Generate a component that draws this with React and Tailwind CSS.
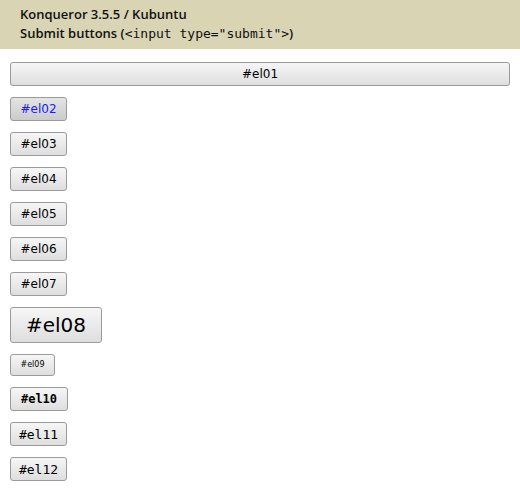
export default function App() {
  const btn =
    "rounded-[3px] border border-[#9a9a9a] bg-gradient-to-b leading-none";
  const plain = `${btn} from-[#f6f6f6] to-[#dedede] text-black`;

  const small = ["#el03", "#el04", "#el05", "#el06", "#el07"];

  return (
    <div className="min-h-screen w-full bg-white" style={{ fontFamily: "'DejaVu Sans', sans-serif" }}>
      {/* Header */}
      <div className="h-[49px] bg-[#d9d4b4] px-[20px] pt-[5px] text-[13px] leading-[19px] text-[#111] font-['Open_Sans',sans-serif] font-semibold">
        <div>Konqueror 3.5.5 / Kubuntu</div>
        <div>
          Submit buttons (
          <span className="font-['DejaVu_Sans_Mono',monospace] font-normal text-[13px]">&lt;input type="submit"&gt;</span>
          )
        </div>
      </div>

      <div className="flex flex-col items-start gap-[11px] px-[10px] pt-[13px]">
        <button className={`${plain} h-[24px] w-full text-[12px]`}>#el01</button>
        <button className={`${btn} h-[24px] w-[57px] text-[12px] text-[#1a1aff] from-[#e4e4e4] to-[#cbcbcb]`}>
          #el02
        </button>
        {small.map((t) => (
          <button key={t} className={`${plain} h-[24px] w-[57px] text-[12px]`}>
            {t}
          </button>
        ))}
        <button className={`${plain} h-[36px] w-[92px] text-[20px]`}>#el08</button>
        <button className={`${plain} h-[22px] w-[45px] text-[8px]`}>#el09</button>
        <button className={`${plain} h-[24px] w-[58px] text-[12px] font-bold font-['DejaVu_Sans_Mono',monospace]`}>
          #el10
        </button>
        <button className={`${plain} h-[24px] w-[57px] text-[13px] font-['DejaVu_Sans_Mono',monospace]`}>#el11</button>
        <button className={`${plain} h-[24px] w-[57px] text-[13px] font-['DejaVu_Sans_Mono',monospace]`}>#el12</button>
      </div>
    </div>
  );
}
